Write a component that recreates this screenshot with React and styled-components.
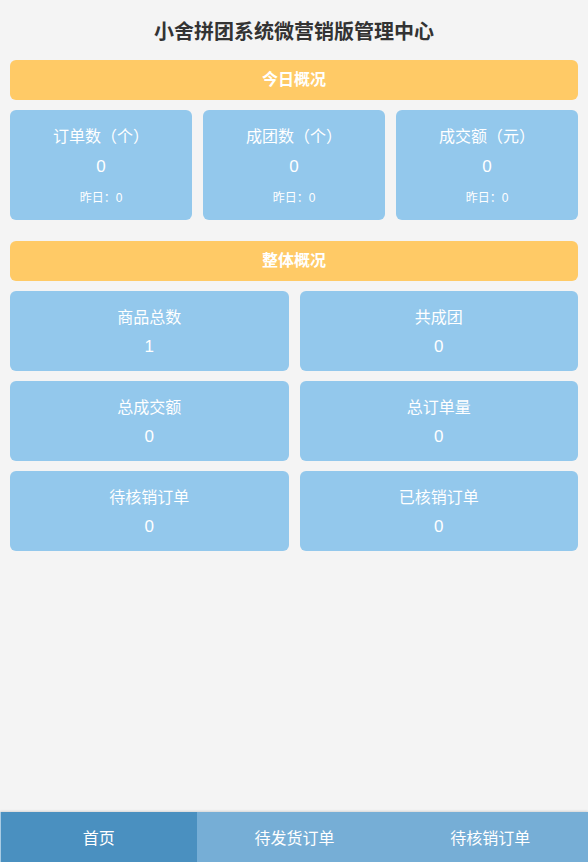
import React from 'react'
import styled, { createGlobalStyle } from 'styled-components'

const GlobalStyle = createGlobalStyle`
    html, body {
        margin: 0;
        padding: 0;
        background: #f4f4f4;
        font-family: "Liberation Sans", "Noto Sans CJK SC", sans-serif;
    }
    * { box-sizing: border-box; }
`

const Page = styled.div`
    display: flex;
    flex-direction: column;
    min-height: 100vh;
`

const Title = styled.h1`
    margin: 0;
    padding: 20px 0 16px;
    font-size: 20px;
    line-height: 24px;
    font-weight: bold;
    color: #333;
    text-align: center;
`

const SectionBar = styled.div`
    margin: ${props => props.top || 0}px 10px 0;
    height: 40px;
    line-height: 40px;
    border-radius: 6px;
    background: #ffca66;
    color: #fff;
    font-size: 16px;
    font-weight: bold;
    text-align: center;
`

const Grid = styled.div`
    display: grid;
    grid-template-columns: repeat(${props => props.cols}, 1fr);
    gap: 10px 11px;
    margin: 10px 10px 0;
`

const Card = styled.div`
    height: ${props => props.h}px;
    padding-top: ${props => props.pt}px;
    border-radius: 6px;
    background: #93c8ec;
    color: #fff;
    text-align: center;
    display: flex;
    flex-direction: column;
    align-items: center;
`

const Label = styled.div`
    font-size: 16px;
    line-height: 20px;
`

const Value = styled.div`
    margin-top: ${props => props.mt}px;
    font-size: 17px;
    line-height: 20px;
`

const Yesterday = styled.div`
    margin-top: 13px;
    font-size: 12px;
    line-height: 16px;
`

const TabBar = styled.div`
    margin-top: auto;
    display: flex;
    height: 50px;
    border-left: 1px solid #a9cbe3;
    box-shadow: 0 -1px 2px rgba(0, 0, 0, 0.12);
`

const Tab = styled.div`
    flex: 1;
    display: flex;
    align-items: center;
    justify-content: center;
    background: ${props => props.active ? '#4a90c0' : '#76aed6'};
    color: #fff;
    font-size: 16px;
`

const today = [
    { label: '订单数（个）', value: 0, yesterday: 0 },
    { label: '成团数（个）', value: 0, yesterday: 0 },
    { label: '成交额（元）', value: 0, yesterday: 0 },
]

const overall = [
    { label: '商品总数', value: 1 },
    { label: '共成团', value: 0 },
    { label: '总成交额', value: 0 },
    { label: '总订单量', value: 0 },
    { label: '待核销订单', value: 0 },
    { label: '已核销订单', value: 0 },
]

const tabs = ['首页', '待发货订单', '待核销订单']

const App = () => {
    return (
        <Page>
            <GlobalStyle />
            <Title>小舍拼团系统微营销版管理中心</Title>

            <SectionBar>今日概况</SectionBar>
            <Grid cols={3}>
                {today.map(item => (
                    <Card key={item.label} h={110} pt={17}>
                        <Label>{item.label}</Label>
                        <Value mt={10}>{item.value}</Value>
                        <Yesterday>昨日：{item.yesterday}</Yesterday>
                    </Card>
                ))}
            </Grid>

            <SectionBar top={21}>整体概况</SectionBar>
            <Grid cols={2}>
                {overall.map(item => (
                    <Card key={item.label} h={80} pt={17}>
                        <Label>{item.label}</Label>
                        <Value mt={9}>{item.value}</Value>
                    </Card>
                ))}
            </Grid>

            <TabBar>
                {tabs.map((t, i) => (
                    <Tab key={t} active={i === 0}>{t}</Tab>
                ))}
            </TabBar>
        </Page>
    )
}

export default App
